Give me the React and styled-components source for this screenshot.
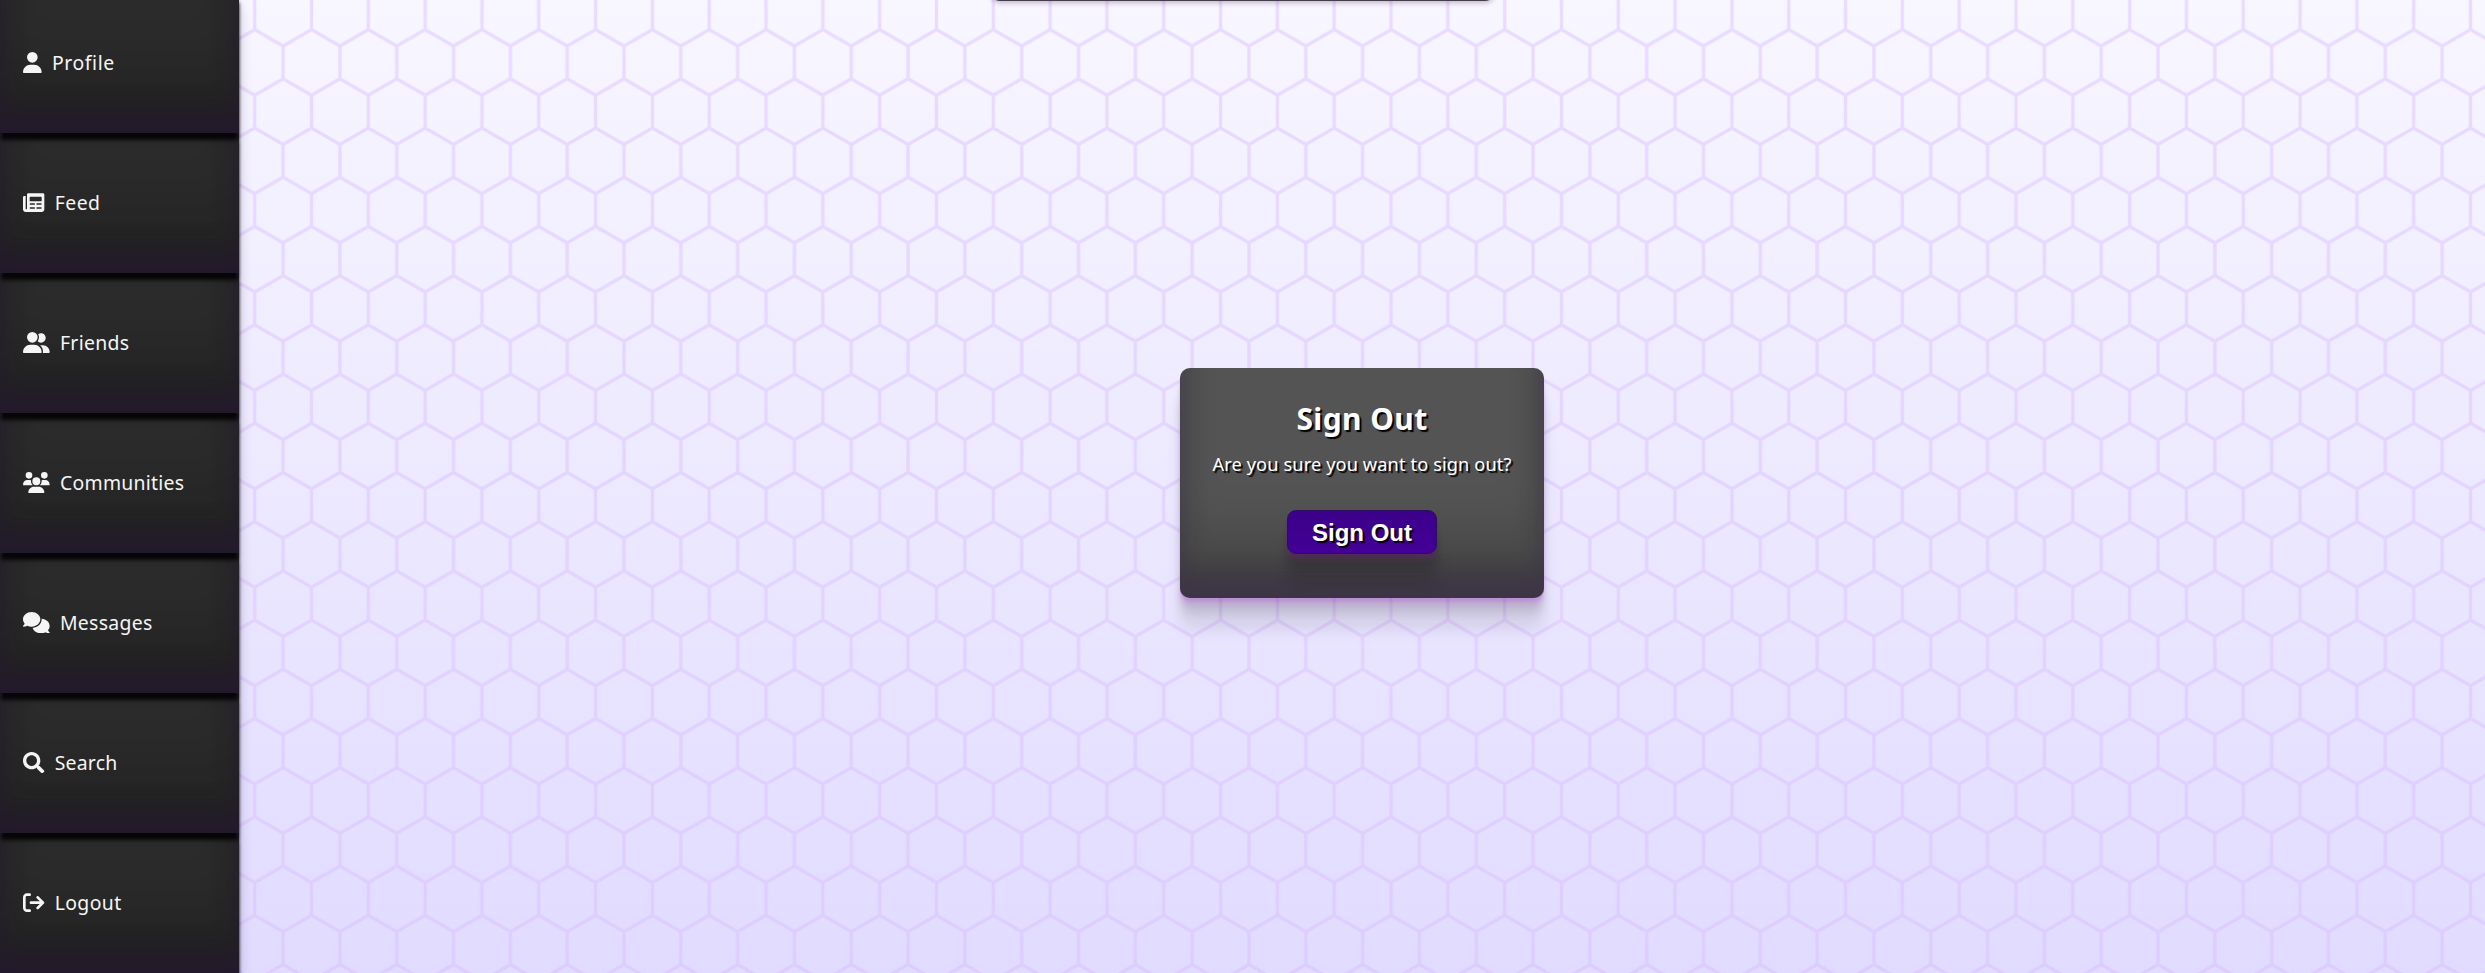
import React from "react";
import styled, { createGlobalStyle, css } from "styled-components";
import { FaSearch } from "react-icons/fa";
import {
  FaUser,
  FaUserGroup,
  FaUsers,
  FaComments,
  FaArrowRightFromBracket,
} from "react-icons/fa6";

const GlobalStyle = createGlobalStyle`
  * { box-sizing: border-box; }
  body { margin: 0; overflow: hidden; font-family: "Noto Sans", sans-serif; }
`;

const innerShade = css`
  inset 0 -23px 25px 0 rgba(51, 0, 98, 0.17),
  inset 0 -36px 30px 0 rgba(0, 0, 0, 0.15),
  inset 0 -79px 40px 0 rgba(0, 0, 0, 0.1)
`;

const dropShade = css`
  0 2px 1px ${(p) => p.$glow[0]},
  0 4px 2px ${(p) => p.$glow[1]},
  0 8px 4px ${(p) => p.$glow[1]},
  0 16px 8px rgba(0, 0, 0, 0.09),
  0 32px 16px rgba(0, 0, 0, 0.09)
`;

const Page = styled.div`
  position: relative;
  display: flex;
  height: 973px;
  overflow: hidden;
  background: linear-gradient(#f8f6ff, #e1dbff);
`;

const Honeycomb = styled.svg`
  position: absolute;
  inset: 0;
  width: 100%;
  height: 100%;
`;

const Sidebar = styled.nav`
  position: relative;
  display: flex;
  flex-direction: column;
  justify-content: flex-end;
  width: 239px;
  height: 973px;
  box-shadow:
    0 3px 3px rgba(0, 0, 0, 0.6),
    0 6px 12px rgba(40, 20, 70, 0.22);
`;

const NavItem = styled.a`
  position: relative;
  z-index: ${(p) => p.$layer};
  flex: none;
  display: flex;
  align-items: center;
  gap: 10px;
  height: 140px;
  padding: 0 0 1px 23.3px;
  color: #f5f5f5;
  font-size: 19.4px;
  background: #2b2b2b;
  box-shadow: ${innerShade}, 0 8px 4px -1px #060606;

  svg {
    flex: none;
    display: block;
    width: ${(p) => p.$iconWidth}px;
    height: 21.33px;
  }
`;

const NavLabel = styled.span`
  letter-spacing: ${(p) => p.$spacing}px;
`;

const Main = styled.main`
  position: relative;
  flex: 1;
  display: flex;
  align-items: center;
  justify-content: center;
  padding-bottom: 7px;
`;

const HiddenBar = styled.div`
  position: absolute;
  top: -39px;
  left: 751px;
  width: 505px;
  height: 40px;
  border-radius: 10px;
  background: #453d4b;
  box-shadow: 0 2px 5px rgba(60, 40, 80, 0.3);
`;

const Card = styled.section`
  display: flex;
  flex-direction: column;
  align-items: center;
  width: 364px;
  height: 230px;
  padding-top: 30px;
  border-radius: 10px;
  color: #fff;
  text-shadow: 2px 2px 1px #000;
  background: #545454;
  box-shadow: ${innerShade}, ${dropShade};
`;

const Title = styled.h1`
  margin: 0;
  font-size: 30px;
  line-height: 42px;
  letter-spacing: 0.4px;
`;

const Question = styled.p`
  margin: 12px 0 0;
  font-size: 18.2px;
  line-height: 24px;
  letter-spacing: 0.12px;
  white-space: nowrap;
`;

const SignOutButton = styled.button`
  width: 150px;
  height: 44px;
  margin-top: 34px;
  padding: 1px 0 0;
  border: 1px solid #2b0d63;
  border-radius: 9px;
  color: #fff;
  font: bold 24px "Liberation Sans", sans-serif;
  text-shadow: 2px 2px 1px #000;
  background: linear-gradient(#3c008a, #430096);
  box-shadow: ${dropShade};
`;

function NewspaperIcon() {
  return (
    <svg viewBox="0 0 512 512" fill="currentColor" aria-hidden="true">
      <path
        fillRule="evenodd"
        d="M480 32H128c-17.700 0-32 14.300-32 32v336c0 8.800-7.200 16-16 16s-16-7.200-16-16V96H32C14.300 96 0 110.300 0 128v288c0 35.300 28.700 64 64 64h384c35.300 0 64-28.700 64-64V64c0-17.700-14.300-32-32-32zM176 112h256a16 16 0 0 1 16 16v80a16 16 0 0 1-16 16H176a16 16 0 0 1-16-16v-80a16 16 0 0 1 16-16zM176 272h96a16 16 0 0 1 0 32h-96a16 16 0 0 1 0-32zM336 272h96a16 16 0 0 1 0 32h-96a16 16 0 0 1 0-32zM176 368h96a16 16 0 0 1 0 32h-96a16 16 0 0 1 0-32zM336 368h96a16 16 0 0 1 0 32h-96a16 16 0 0 1 0-32z"
      />
    </svg>
  );
}

const items = [
  { label: "Profile", Icon: FaUser, iconWidth: 18.67, spacing: 0.6 },
  { label: "Feed", Icon: NewspaperIcon, iconWidth: 21.33, spacing: 0.5 },
  { label: "Friends", Icon: FaUserGroup, iconWidth: 26.67, spacing: 0.3 },
  { label: "Communities", Icon: FaUsers, iconWidth: 26.67, spacing: 0.27 },
  { label: "Messages", Icon: FaComments, iconWidth: 26.67, spacing: 0.3 },
  { label: "Search", Icon: FaSearch, iconWidth: 21.33, spacing: 0.25 },
  { label: "Logout", Icon: FaArrowRightFromBracket, iconWidth: 21.33, spacing: 0.4 },
];

const HEX_W = 56.816;
const HEX_H = 98.41;
const S = HEX_H / 3;

function HoneycombPattern() {
  const w = HEX_W;
  const path = [
    `M${w / 2} ${-S} V0`,
    `M${-w / 2} 0 L0 ${S / 2} L${w / 2} 0 L${w} ${S / 2} L${w * 1.5} 0`,
    `M0 ${S / 2} V${S * 1.5} M${w} ${S / 2} V${S * 1.5}`,
    `M${-w / 2} ${S * 2} L0 ${S * 1.5} L${w / 2} ${S * 2} L${w} ${S * 1.5} L${w * 1.5} ${S * 2}`,
    `M${w / 2} ${S * 2} V${S * 3}`,
    `M${-w / 2} ${S * 3} L0 ${S * 3.5} L${w / 2} ${S * 3} L${w} ${S * 3.5}`,
  ].join(" ");
  return (
    <Honeycomb aria-hidden="true">
      <defs>
        <pattern
          id="honeycomb"
          width={w}
          height={HEX_H}
          x={254.7 - w / 2}
          y="29.6"
          patternUnits="userSpaceOnUse"
        >
          <path d={path} fill="none" stroke="#d8bbfe" strokeWidth="3.4" />
        </pattern>
      </defs>
      <rect width="100%" height="100%" fill="url(#honeycomb)" opacity="0.44" />
    </Honeycomb>
  );
}

const cardGlow = ["rgba(180, 60, 210, 0.08)", "rgba(180, 60, 210, 0.14)"];
const buttonGlow = ["rgba(130, 20, 150, 0.1)", "rgba(130, 20, 150, 0.14)"];

export default function App() {
  return (
    <Page>
      <GlobalStyle />
      <HoneycombPattern />
      <Sidebar>
        {items.map(({ label, Icon, iconWidth, spacing }, i) => (
          <NavItem key={label} $layer={items.length - i} $iconWidth={iconWidth}>
            <Icon />
            <NavLabel $spacing={spacing}>{label}</NavLabel>
          </NavItem>
        ))}
      </Sidebar>
      <Main>
        <HiddenBar />
        <Card $glow={cardGlow}>
          <Title>Sign Out</Title>
          <Question>Are you sure you want to sign out?</Question>
          <SignOutButton $glow={buttonGlow}>Sign Out</SignOutButton>
        </Card>
      </Main>
    </Page>
  );
}
